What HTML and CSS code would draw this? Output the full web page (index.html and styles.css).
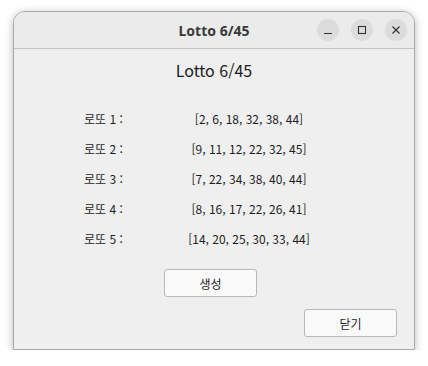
FILE: index.html
```html
<!DOCTYPE html>
<html lang="ko">
<head>
    <meta charset="UTF-8">
    <title>Lotto 6/45</title>
    <link rel="stylesheet" href="styles.css">
</head>
<body>
    <div class="window">
        <div class="titlebar">
            <span class="title">Lotto 6/45</span>
            <div class="controls">
                <button class="ctl" aria-label="minimize">
                    <svg width="10" height="10" viewBox="0 0 10 10"><path d="M1 8.5h8" stroke="#333" stroke-width="1.2"/></svg>
                </button>
                <button class="ctl" aria-label="maximize">
                    <svg width="10" height="10" viewBox="0 0 10 10"><rect x="1.5" y="1.5" width="7" height="7" fill="none" stroke="#333" stroke-width="1.1"/></svg>
                </button>
                <button class="ctl" aria-label="close">
                    <svg width="10" height="10" viewBox="0 0 10 10"><path d="M1.5 1.5l7 7M8.5 1.5l-7 7" stroke="#333" stroke-width="1.2"/></svg>
                </button>
            </div>
        </div>
        <div class="content">
            <h1 class="heading">Lotto 6/45</h1>
            <div class="rows">
                <div class="row"><span class="label">로또 1 :</span><span class="nums">[2, 6, 18, 32, 38, 44]</span></div>
                <div class="row"><span class="label">로또 2 :</span><span class="nums">[9, 11, 12, 22, 32, 45]</span></div>
                <div class="row"><span class="label">로또 3 :</span><span class="nums">[7, 22, 34, 38, 40, 44]</span></div>
                <div class="row"><span class="label">로또 4 :</span><span class="nums">[8, 16, 17, 22, 26, 41]</span></div>
                <div class="row"><span class="label">로또 5 :</span><span class="nums">[14, 20, 25, 30, 33, 44]</span></div>
            </div>
            <div class="gen-line">
                <button class="btn">생성</button>
            </div>
            <div class="close-line">
                <button class="btn">닫기</button>
            </div>
        </div>
    </div>
</body>
</html>
```

FILE: styles.css
```css
/* page */
body {
    margin: 0;
    background: #ffffff;
    font-family: "Noto Sans CJK KR", "Noto Sans", sans-serif;
    color: #1e1e1e;
}

/* window frame */
.window {
    margin: 11px 0 0 13px;
    width: 400px;
    height: 337px;
    border: 1px solid #a8a8a8;
    border-radius: 12px 12px 0 0;
    background: #efefef;
    box-shadow: 0 2px 8px rgba(0, 0, 0, 0.28);
    overflow: hidden;
}

/* title bar */
.titlebar {
    height: 36px;
    background: #ebebeb;
    border-bottom: 1px solid #c2c2c2;
    display: flex;
    align-items: center;
    justify-content: center;
    position: relative;
}

.title {
    font-family: "Noto Sans", sans-serif;
    font-size: 14px;
    font-weight: bold;
    color: #3a3a3a;
}

.controls {
    position: absolute;
    right: 7px;
    top: 7px;
    display: flex;
    gap: 12px;
}

.ctl {
    width: 22px;
    height: 22px;
    border: none;
    border-radius: 50%;
    background: #dcdcdc;
    padding: 0;
    display: flex;
    align-items: center;
    justify-content: center;
}

/* main area */
.content {
    padding-top: 10px;
}

.heading {
    margin: 0;
    text-align: center;
    font-size: 16px;
    font-weight: normal;
    line-height: 22px;
    color: #1a1a1a;
}

.rows {
    margin-top: 22px;
    padding-left: 70px;
}

.row {
    display: flex;
    height: 30px;
    align-items: center;
    font-size: 12px;
}

.label {
    width: 66px;
}

.nums {
    width: 198px;
    text-align: center;
}

/* buttons */
.gen-line {
    margin-top: 16px;
    padding-left: 150px;
}

.close-line {
    margin-top: 12px;
    display: flex;
    justify-content: flex-end;
    padding-right: 17px;
}

.btn {
    width: 93px;
    height: 28px;
    border: 1px solid #b8b8b8;
    border-radius: 3px;
    background: #f9f9f9;
    font-family: "Noto Sans CJK KR", sans-serif;
    font-size: 12px;
    color: #1e1e1e;
}
```
